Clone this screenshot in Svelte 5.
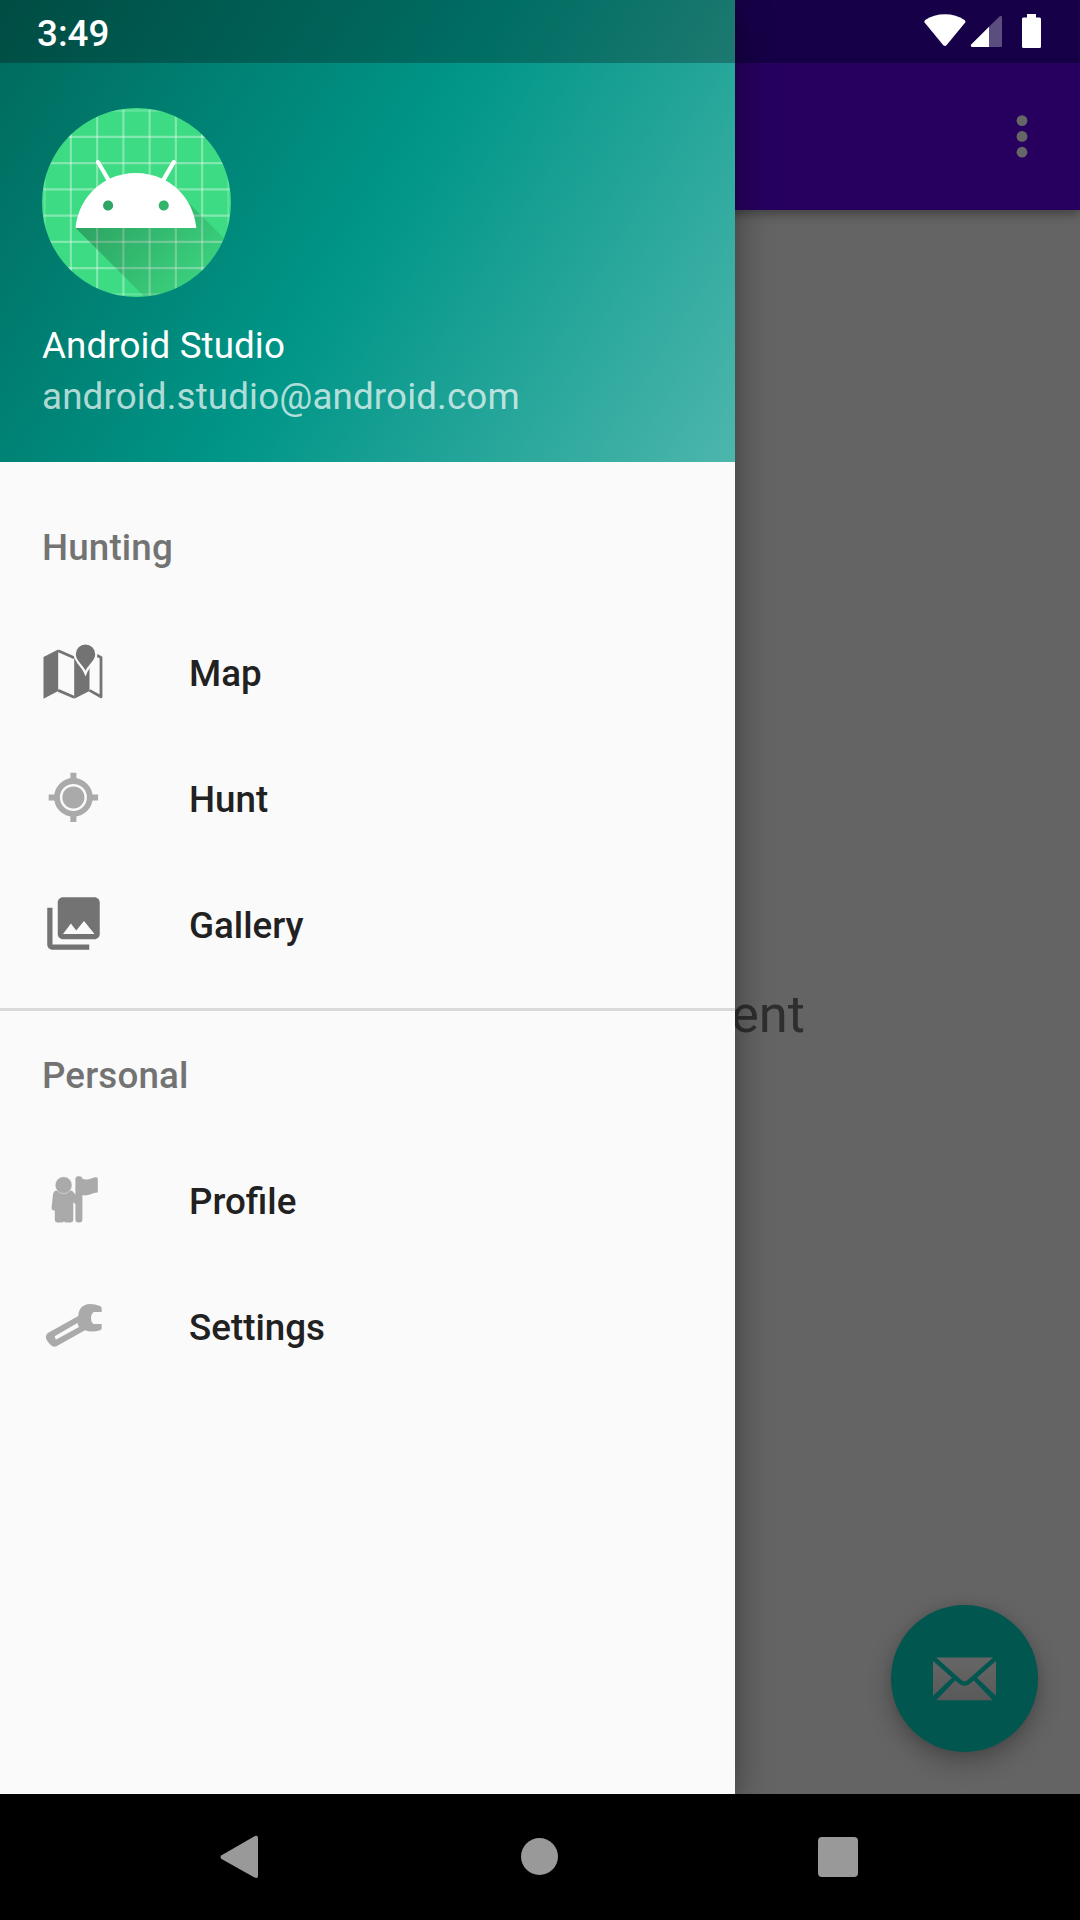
<script>
  const sections = [
    { title: 'Hunting', items: ['Map', 'Hunt', 'Gallery'] },
    { title: 'Personal', items: ['Profile', 'Settings'] }
  ];
  const gridLines = [19, 29, 39, 49, 59, 69, 79, 89];
</script>

<div class="screen">
  <div class="stage">
    <div class="page">
      <div class="page-status"></div>
      <header class="appbar">
        <svg class="more" width="12" height="44" viewBox="0 0 12 44">
          <circle cx="6" cy="5.6" r="5.4" /><circle cx="6" cy="21.4" r="5.4" /><circle cx="6" cy="37.2" r="5.4" />
        </svg>
      </header>
      <main class="content">This is home Fragment</main>
      <div class="fab">
        <svg width="63" height="63" viewBox="0 0 63 63">
          <defs>
            <linearGradient id="paper" x1="0" y1="10" x2="0" y2="54" gradientUnits="userSpaceOnUse">
              <stop offset="0" stop-color="#666" /><stop offset="1" stop-color="#595959" />
            </linearGradient>
          </defs>
          <g fill="url(#paper)">
            <path d="M3.2 10.6H60L35.8 32Q31.5 36.4 27.2 32Z" />
            <path d="M0 14V48.7L19 30.7Z" />
            <path d="M63 14V48.7L44 30.7Z" />
            <path d="M3.3 53.2H59.7L40.8 33.6L37 36.8Q31.5 40.6 26 36.8L22.2 33.6Z" />
          </g>
        </svg>
      </div>
    </div>

    <aside class="drawer">
      <div class="account">
        <svg class="avatar" width="189" height="189" viewBox="18 18 72 72">
          <defs>
            <clipPath id="round"><circle cx="54" cy="54" r="36" /></clipPath>
            <linearGradient id="cast" x1="42.9492" y1="49.59796" x2="85.84757" y2="92.4963" gradientUnits="userSpaceOnUse">
              <stop offset="0" stop-color="#000" stop-opacity=".267" />
              <stop offset="1" stop-color="#000" stop-opacity="0" />
            </linearGradient>
          </defs>
          <g clip-path="url(#round)">
            <rect width="108" height="108" fill="#3ddc84" />
            <g stroke="#fff" stroke-opacity=".2" stroke-width=".8">
              {#each gridLines as p}
                <path d="M{p} 0V108" />
                <path d="M0 {p}H108" />
                {#if p > 19 && p < 89}
                  <path d="M{p} 19V89" />
                  <path d="M19 {p}H89" />
                {/if}
              {/each}
            </g>
            <g transform="translate(-.2 -.25)">
              <path fill="url(#cast)" d="M31,63.928c0,0 6.4,-11 12.1,-13.1c7.2,-2.6 26,-1.4 26,-1.4l38.1,38.1L107,108.928l-32,-1L31,63.928z" />
              <path fill="#fff" d="M65.3,45.828l3.8,-6.6c0.2,-0.4 0.1,-0.9 -0.3,-1.1c-0.4,-0.2 -0.9,-0.1 -1.1,0.3l-3.9,6.7c-6.3,-2.8 -13.4,-2.8 -19.7,0l-3.9,-6.7c-0.2,-0.4 -0.7,-0.5 -1.1,-0.3C38.8,38.328 38.7,38.828 38.9,39.228l3.8,6.6C36.2,49.428 31.7,56.028 31,63.928h46C76.3,56.028 71.8,49.428 65.3,45.828zM43.4,57.328c-0.8,0 -1.5,-0.5 -1.8,-1.2c-0.3,-0.7 -0.1,-1.5 0.4,-2.1c0.5,-0.5 1.4,-0.7 2.1,-0.4c0.7,0.3 1.2,1 1.2,1.8C45.3,56.528 44.5,57.328 43.4,57.328zM64.6,57.328c-0.8,0 -1.5,-0.5 -1.8,-1.2s-0.1,-1.5 0.4,-2.1c0.5,-0.5 1.4,-0.7 2.1,-0.4c0.7,0.3 1.2,1 1.2,1.8C66.5,56.528 65.6,57.328 64.6,57.328z" />
            </g>
          </g>
        </svg>
        <div class="name">Android Studio</div>
        <div class="email">android.studio@android.com</div>
      </div>

      <nav class="menu">
        {#each sections as section, i}
          {#if i > 0}<div class="divider"></div>{/if}
          <div class="title">{section.title}</div>
          {#each section.items as item}
            <div class="item">
              <svg class="icon" width="63" height="63" viewBox="0 0 63 63">
                {#if item === 'Map'}
                  <g transform="translate(.2 .4)">
                    <path fill="#737373" d="M1.3 16.7L16 9V50.7L1.3 58.3ZM32 16.7L47.3 10V50.7L32 58.3Z" />
                    <path fill="none" stroke="#737373" stroke-width="2.8" stroke-linejoin="round" d="M16 10.4L32 17.4M16 50L32 56.8M47.3 50L58.8 56.4V17L53 14" />
                    <path fill="#737373" stroke="#fafafa" stroke-width="4.4" paint-order="stroke" d="M43.3 30.4C41 25 33.6 20 33.6 13.8A9.7 9.7 0 0 1 53 13.8C53 20 45.6 25 43.3 30.4Z" />
                  </g>
                {:else if item === 'Hunt'}
                  <circle cx="31.4" cy="31.4" r="16.4" fill="none" stroke="#aaa" stroke-width="5.8" />
                  <circle cx="31.4" cy="31.4" r="11" fill="#aaa" />
                  <path stroke="#aaa" stroke-width="6" d="M31.4 6.7V14M31.4 48.8V56.1M6.7 31.4H14M48.8 31.4H56.1" />
                {:else if item === 'Gallery'}
                  <path fill="#737373" transform="scale(2.625)" d="M22 16V4c0-1.1-.9-2-2-2H8c-1.1 0-2 .9-2 2v12c0 1.1.9 2 2 2h12c1.1 0 2-.9 2-2zm-11-4l2.03 2.71L16 11l4 5H8l3-4zM2 6v14c0 1.1.9 2 2 2h14v-2H4V6H2z" />
                {:else if item === 'Profile'}
                  <g fill="#aaa">
                    <path d="M15 22.5H28.5C30.5 22.5 31.5 24 34.5 28V36.5L31.3 34.5V51.5Q31.3 54.4 28.5 54.4H25Q22.7 54.4 22 53.4Q21.4 54.4 19 54.4H15.5Q12.8 54.4 12.8 51.5V42.5H11.5Q9.4 42 9.5 40L11 26.5Q11.5 22.5 15 22.5Z" />
                    <circle cx="21.6" cy="17.2" r="8.4" stroke="#fafafa" stroke-opacity=".55" stroke-width=".8" />
                    <rect x="33.4" y="8.2" width="7" height="46.2" rx="3" />
                    <path d="M40 10.5C46 13.5 50 9 54.5 9.2Q55.8 9.4 55.8 11V24.5C51 24 46 29 40 27Z" />
                  </g>
                {:else}
                  <path fill="#aaa" fill-rule="evenodd" transform="translate(0 -9.3)" d="M6.3 48L36.3 31.3C36.3 24 41 19.3 48 19.2Q53 19.2 58 21.3Q59.7 22 59.7 24V27.3H51.5Q49 29.5 49 33.5Q49 37.5 51.5 39.2H59.7V43Q59.7 45 58 45.6Q50 48.2 43 45.6L15 61.2Q11.5 63 9 60.5Q5.5 57.5 4 53.7Q3.4 50 6.3 48ZM12.7 51.6L13.8 55L37 42.3L35.3 38.4Z" />
                {/if}
              </svg>
              <span>{item}</span>
            </div>
          {/each}
        {/each}
      </nav>
    </aside>

    <div class="statusbar">
      <span class="clock">3:49</span>
      <svg width="118" height="63" viewBox="0 0 118 63" fill="#fff">
        <path transform="translate(.6 0)" d="M21.3 46Q20.4 46 19.5 45L1 22.6Q.2 21 1.6 20Q10 14.2 21.3 14.2T41 20Q42.4 21 41.6 22.6L23.1 45Q22.2 46 21.3 46Z" />
        <path opacity=".3" d="M66 26.8L76.5 16.4Q79 14.8 79 17.5V45.5Q79 47 77.5 47H66Z" />
        <path d="M66 26.8V47H49Q47 46.6 48.2 44.6Z" />
        <path d="M104 14H113V17.5H116.6Q118 17.5 118 19V46.5Q118 48 116.6 48H100.4Q99 48 99 46.5V19Q99 17.5 100.4 17.5H104Z" />
      </svg>
    </div>
  </div>

  <footer class="navbar">
    <svg width="42" height="46" viewBox="0 0 42 46"><path d="M2.6 21.2L35.5 2.2Q39 .8 39 4V42Q39 45 35.5 43.6L2.6 24.9Q.4 23 2.6 21.2Z" /></svg>
    <svg width="38" height="46" viewBox="0 0 38 46"><circle cx="19.5" cy="22.5" r="18.5" /></svg>
    <svg width="40" height="46" viewBox="0 0 40 46"><rect y="3" width="40" height="40" rx="4" /></svg>
  </footer>
</div>

<style>
  :global(body) { margin: 0; }
  .screen {
    width: 1080px;
    height: 1920px;
    display: flex;
    flex-direction: column;
    overflow: hidden;
    background: #000;
    font-family: Roboto, sans-serif;
    font-size: 36.75px;
  }
  svg { display: block; flex: none; }
  .stage { position: relative; flex: 1; overflow: hidden; }
  .page { height: 100%; display: flex; flex-direction: column; background: #646464; }
  .page-status { height: 63px; background: #160048; }
  .appbar {
    height: 147px;
    box-sizing: border-box;
    padding-right: 52px;
    display: flex;
    align-items: center;
    justify-content: flex-end;
    background: #27005f;
    box-shadow: 0 4px 10px rgba(0, 0, 0, .35);
  }
  .more { fill: #666; }
  .content {
    flex: 1;
    display: flex;
    align-items: center;
    justify-content: center;
    padding: 24px 5px 0 0;
    font-size: 52.5px;
    color: #2e2e2e;
  }
  .fab {
    position: absolute;
    right: 42px;
    bottom: 42px;
    width: 147px;
    height: 147px;
    border-radius: 50%;
    display: flex;
    align-items: center;
    justify-content: center;
    background: #01574f;
    box-shadow: 0 10px 24px rgba(0, 0, 0, .28), 0 0 8px rgba(0, 0, 0, .08);
  }
  .drawer {
    position: absolute;
    inset: 0 auto 0 0;
    width: 735px;
    display: flex;
    flex-direction: column;
    background: #fafafa;
    box-shadow: 0 10px 34px rgba(0, 0, 0, .42);
  }
  .account {
    height: 462px;
    box-sizing: border-box;
    padding: 108px 42px 0;
    background: linear-gradient(122.15deg, #00695c, #009688 50%, #4db6ac);
  }
  .name { margin-top: 23px; line-height: 51px; letter-spacing: .1px; color: #fff; }
  .email { line-height: 51px; letter-spacing: .14px; color: rgba(255, 255, 255, .7); }
  .menu { padding-top: 21px; font-weight: 500; }
  .title, .item { height: 126px; box-sizing: border-box; padding: 0 42px; display: flex; align-items: center; }
  .title { padding-top: 2px; letter-spacing: .15px; color: #737373; }
  .item { gap: 84px; color: #212121; }
  .item span { padding-top: 2px; }
  .icon { margin-top: -1px; }
  .divider { height: 3px; margin-top: 21px; background: #dadada; }
  .statusbar {
    position: absolute;
    inset: 0 0 auto 0;
    height: 63px;
    box-sizing: border-box;
    padding: 0 39px 0 37px;
    display: flex;
    align-items: center;
    justify-content: space-between;
    color: #fff;
    font-weight: 500;
    background: linear-gradient(rgba(0, 0, 0, .27), rgba(0, 0, 0, .27)) 0 0 / 735px 100% no-repeat;
  }
  .clock { padding-top: 3px; }
  .navbar {
    height: 126px;
    box-sizing: border-box;
    padding: 0 222px 0 218.5px;
    display: flex;
    align-items: center;
    justify-content: space-between;
    fill: #999;
  }
</style>
